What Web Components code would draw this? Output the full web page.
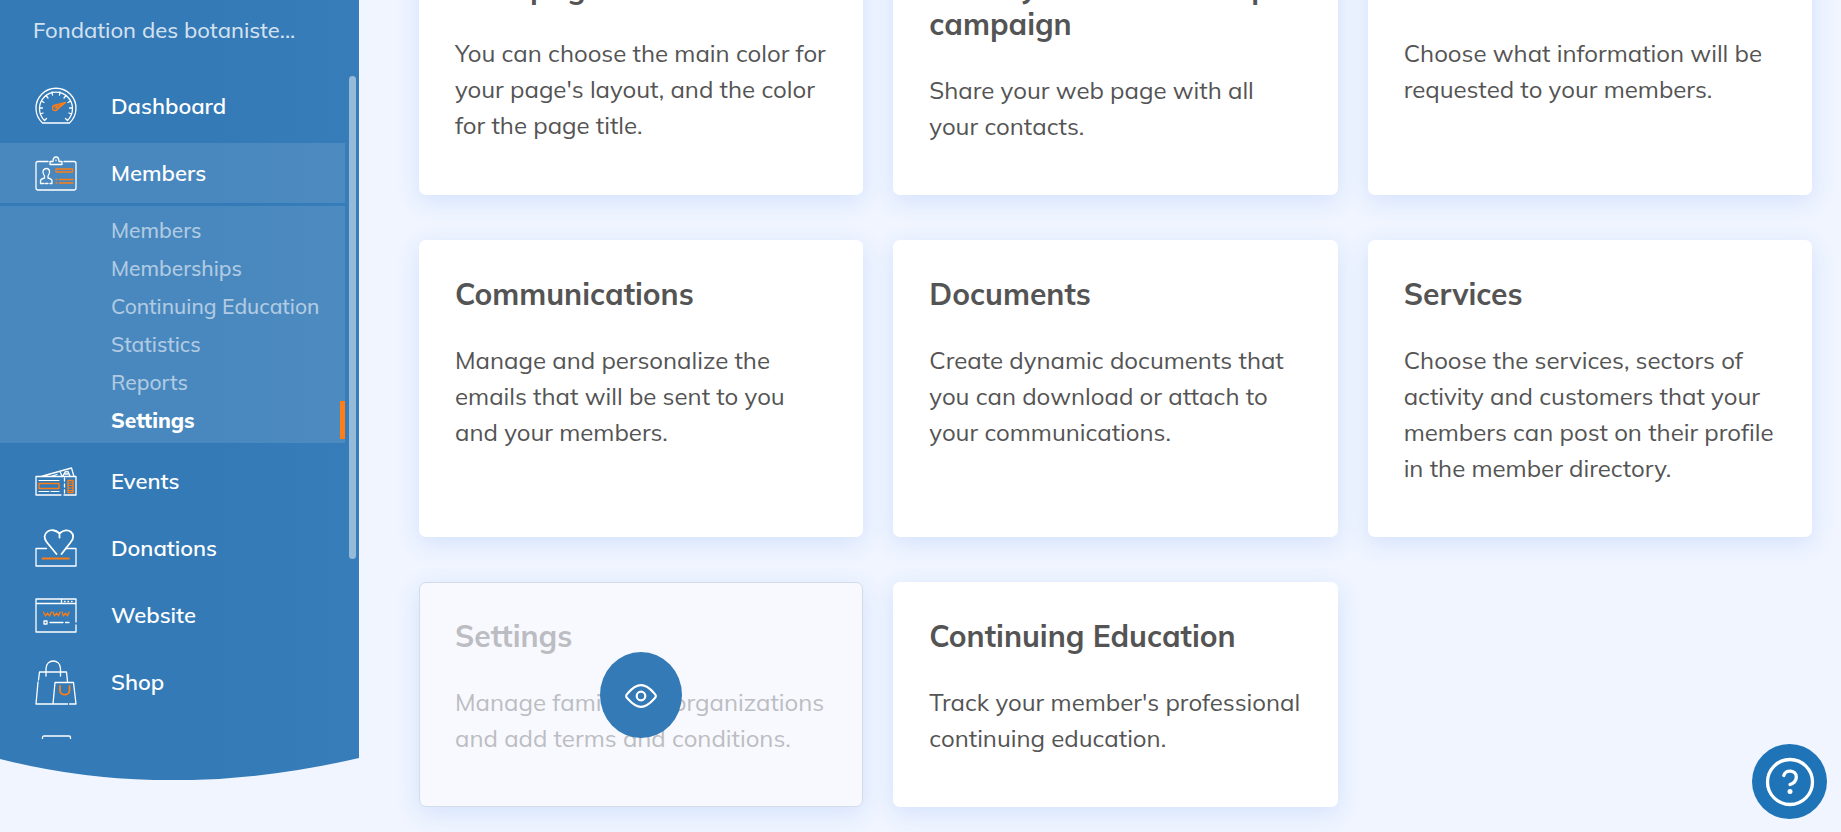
<!DOCTYPE html>
<html lang="en">
<head>
<meta charset="utf-8">
<title>Members - Settings</title>
<style>
  html, body {
    margin: 0;
    height: 100%;
  }
  body {
    background: #f0f5ff;
    color: #545454;
    font-family: Mulish, Muli, Lato, 'Open Sans', sans-serif;
    font-size: 24px;
    font-variant-ligatures: none;
    line-height: 36px;
    overflow: hidden;
  }
</style>
</head>
<body>
<app-shell>
  <side-bar slot="sidebar" organization="Fondation des botaniste...">
    <nav-item icon="dashboard" label="Dashboard"></nav-item>
    <nav-item icon="members" label="Members" open>
      <sub-item>Members</sub-item>
      <sub-item>Memberships</sub-item>
      <sub-item>Continuing Education</sub-item>
      <sub-item>Statistics</sub-item>
      <sub-item>Reports</sub-item>
      <sub-item current>Settings</sub-item>
    </nav-item>
    <nav-item icon="events" label="Events"></nav-item>
    <nav-item icon="donations" label="Donations"></nav-item>
    <nav-item icon="website" label="Website"></nav-item>
    <nav-item icon="shop" label="Shop"></nav-item>
    <nav-item icon="finances" label="Finances"></nav-item>
  </side-bar>

  <settings-card heading="Web page">You can choose the main color for your page's layout, and the color for the page title.</settings-card>
  <settings-card heading="Share your membership campaign">Share your web page with all your contacts.</settings-card>
  <settings-card heading="Form">Choose what information will be requested to your members.</settings-card>
  <settings-card heading="Communications">Manage and personalize the emails that will be sent to you and your members.</settings-card>
  <settings-card heading="Documents">Create dynamic documents that you can download or attach to your communications.</settings-card>
  <settings-card heading="Services">Choose the services, sectors of activity and customers that your members can post on their profile in the member directory.</settings-card>
  <settings-card heading="Settings" inactive>Manage families or organizations and add terms and conditions.</settings-card>
  <settings-card heading="Continuing Education">Track your member's professional continuing education.</settings-card>

  <help-button slot="help"></help-button>
</app-shell>

<script>
(function() {
  // White strokes by default, class "o" for the orange accents
  const ICONS = {
    dashboard: [38, `
      <path d="M7.500 36A20 20 0 1 1 34.500 36Z"/>
      <path d="M11.500 31.500L9.500 33.500A16.500 16.500 0 1 1 32.500 33.500L30.500 31.500"/>
      <path d="M4.500 21h3M37.500 21h-3M5.500 27l2.500-1M36.500 27l-2.500-1M6.500 14l2.500 1.500M35.500 14l-2.500 1.500M11 8.500l2 2.500M31 8.500l-2 2.500M17 5l.5 3M25 5l-.5 3"/>
      <g class="o"><circle cx="20" cy="21" r="2.500"/><path d="M19 18.500L30.500 15.500L21.500 23M20 21l7-3.500"/></g>`],
    members: [35, `
      <path d="M13 5.500H3Q1 5.500 1 7.500V32Q1 34 3 34H39Q41 34 41 32V7.500Q41 5.500 39 5.500H29"/>
      <path d="M15 8.500V5.500H18Q18 1 21 1Q24 1 24 5.500H27V8.500ZM21 4v.5"/>
      <path d="M8.500 27.500H5.500V25Q5.500 23 9.500 22V20Q7.500 17 8 15Q9 12.500 11.500 12.500Q14 12.500 14.500 15Q15 17 13 20V22Q17 23 17 25V27.500H15M10 27.500h3"/>
      <g class="o"><path d="M21 13H37.500V16H21ZM24.500 23.500H38M24.500 27H38M21 23.500h1M21 27h1"/></g>`],
    events: [29, `
      <path d="M26 28H1V9.500H41V28H29M6 9.500L36.500 1L39 9.500M15 9.500L22 7.500M25 4.500L27 9M28 9L30 5L33 4.500L35 9M30 7h3"/>
      <path d="M4 13.500H24M4 24.500H14M16 24.500H24" class="t"/>
      <path d="M29.500 11V27" stroke-dasharray="3 3"/>
      <g class="o"><path d="M4 16.500H24V21.500H4ZM33 13.500H38V25.500H33Z"/><path class="t" d="M33 16H38M33 18.500H38M33 21H38M33 23.500H38"/></g>`],
    donations: [38, `
      <path d="M11.500 19.500H1V37H41V19.500H30.500"/>
      <path d="M21.500 25L12 13.500C4.500 4.500 16.500-3.500 24.500 4.500V8.500M24.500 4.500C33-3.500 43 5.500 35.500 13.500L26.500 25" class="b"/>
      <path d="M7.500 29.500H34" class="o b"/>`],
    website: [35, `
      <path d="M41 24V1H1V34H41V27M1 5.500H41M26.500 1V5.500"/>
      <path d="M29.500 3.500h.5M33 3.500h.5M36.500 3.500h.5M15 24.500H28M30.500 24.500H34M9 23h3v3h-3z"/>
      <path class="o" d="M8.500 14L10.500 18L12.500 15L14.500 18L16.500 14M18 14L19.500 18L21.500 15L23.500 18L25 14M27 14L28.500 18L30.500 15L32.500 18L34 14"/>`],
    shop: [45, `
      <path d="M3.500 20L4.500 12H31.500L32.500 21.500M3 22L1 44H32.500M34.500 44H41L38.500 22.500H20L18 44"/>
      <path d="M11 16V8.500C11-1.500 25.500-1.500 25.500 8.500V16"/>
      <path class="o b" d="M25 26V30.500C25 36 34.500 36 34.500 30.500V26"/>`],
    finances: [28, `
      <path d="M7.500 4V2.500Q7.500 1 9 1H34Q35.500 1 35.500 2.500V4M1 8H41V27H1Z"/>`]
  };

  // Attaches an open shadow root holding the given markup
  class BaseElement extends HTMLElement {
    connectedCallback() {
      if (this.shadowRoot) return;
      this.attachShadow({ mode: 'open' });
      this.shadowRoot.innerHTML = this.template();
    }
  }

  class AppShell extends BaseElement {
    template() {
      return `
        <style>
          :host {
            display: flex;
            align-items: flex-start;
            height: 100vh;
            overflow: hidden;
          }
          main {
            flex: 1;
            min-width: 0;
            padding: 0 29px 24px 60px;
          }
          .grid {
            display: grid;
            grid-template-columns: repeat(3, 1fr);
            gap: 45px 30px;
            /* the first row is scrolled partly out of view */
            margin-top: -67px;
          }
        </style>
        <slot name="sidebar"></slot>
        <main><div class="grid"><slot></slot></div></main>
        <slot name="help"></slot>
      `;
    }
  }

  class SideBar extends BaseElement {
    template() {
      return `
        <style>
          :host {
            display: flex;
            flex-direction: column;
            flex: none;
            position: relative;
            width: 359px;
            height: calc(100vh - 52px);
          }
          .panel {
            flex: 1;
            min-height: 0;
            display: flex;
            flex-direction: column;
            background: linear-gradient(90deg, #337ab7 60%, #377db9);
            padding-bottom: 19px;
          }
          .organization {
            padding: 12px 33px 28px;
            color: rgba(255, 255, 255, 0.78);
            font-size: 22px;
            font-weight: 500;
            white-space: nowrap;
          }
          nav {
            flex: 1;
            min-height: 0;
            overflow: hidden;
            margin-right: 14px;
          }
          .thumb {
            position: absolute;
            top: 76px;
            right: 3px;
            width: 7px;
            height: 483px;
            border-radius: 4px;
            background: rgba(255, 255, 255, 0.47);
          }
          .curve {
            display: block;
            width: 100%;
            height: 22px;
          }
        </style>
        <div class="panel">
          <div class="organization">${this.getAttribute('organization')}</div>
          <nav><slot></slot></nav>
        </div>
        <svg class="curve" viewBox="0 0 359 22" preserveAspectRatio="none" aria-hidden="true">
          <defs>
            <linearGradient id="fill"><stop offset="0.6" stop-color="#337ab7"/><stop offset="1" stop-color="#377db9"/></linearGradient>
          </defs>
          <path d="M0 0H359Q170 44 0 1Z" fill="url(#fill)"/>
        </svg>
        <div class="thumb"></div>
      `;
    }
  }

  class NavItem extends BaseElement {
    template() {
      const [height, shapes] = ICONS[this.getAttribute('icon')];
      return `
        <style>
          :host {
            display: block;
            margin-bottom: 7px;
          }
          :host([open]) {
            margin-bottom: 8px;
          }
          a {
            display: flex;
            align-items: center;
            gap: 34px;
            height: 60px;
            padding-left: 35px;
            color: #fff;
            font-size: 22px;
            font-weight: 600;
            text-decoration: none;
          }
          :host([open]) a, .submenu {
            background: rgba(255, 255, 255, 0.11);
          }
          .submenu {
            display: none;
            margin-top: 3px;
            padding: 5px 0 4px;
          }
          :host([open]) .submenu {
            display: block;
          }
          svg {
            flex: none;
            fill: none;
            stroke: #fff;
            stroke-width: 1.3;
            stroke-linecap: round;
            stroke-linejoin: round;
          }
          .b { stroke-width: 1.8; }
          .t { stroke-width: 1; }
          .o { stroke: #ff7d14; }
        </style>
        <a href="#${this.getAttribute('icon')}">
          <svg width="42" height="${height}" viewBox="0 0 42 ${height}" aria-hidden="true">${shapes}</svg>
          <span>${this.getAttribute('label')}</span>
        </a>
        <div class="submenu"><slot></slot></div>
      `;
    }
  }

  class SubItem extends BaseElement {
    template() {
      return `
        <style>
          :host {
            display: block;
          }
          a {
            display: block;
            padding-left: 111px;
            border-right: 5px solid transparent;
            color: rgba(255, 255, 255, 0.58);
            font-size: 21px;
            font-weight: 500;
            line-height: 38px;
            text-decoration: none;
            white-space: nowrap;
          }
          :host([current]) a {
            border-color: #ff7d14;
            color: #fff;
            font-weight: 800;
          }
        </style>
        <a href="#"><slot></slot></a>
      `;
    }
  }

  class SettingsCard extends BaseElement {
    template() {
      const inactive = this.hasAttribute('inactive');
      return `
        <style>
          :host {
            display: block;
            position: relative;
            box-sizing: border-box;
            padding: 36px 36px 51px;
            border-radius: 7px;
            background: #fff;
            box-shadow: 0 6px 24px rgba(40, 110, 235, 0.14);
          }
          :host([inactive]) {
            padding: 35px 35px 50px;
            border: 1px solid #d3dce9;
            background: #f7f9fe;
            color: #bcbdc2;
          }
          h2 {
            margin: 0 0 29px;
            font-size: 30px;
            font-weight: 700;
            line-height: 37px;
          }
          p {
            margin: 0;
          }
          button {
            position: absolute;
            top: 50%;
            left: 50%;
            transform: translate(-50%, -50%);
            display: flex;
            align-items: center;
            justify-content: center;
            width: 82px;
            height: 86px;
            padding: 2px 0 0;
            border: 0;
            border-radius: 50%;
            background: #337ab7;
          }
        </style>
        <h2>${this.getAttribute('heading')}</h2>
        <p><slot></slot></p>
        ${inactive ? `
          <button type="button" aria-label="Show">
            <svg width="32" height="24" viewBox="0 0 32 24" fill="none" stroke="#fff" stroke-width="2.200">
              <path d="M1.200 12Q1 11 3 9Q10 1.200 16 1.200Q22 1.200 29 9Q31 11 30.800 12Q31 13 29 15Q22 22.800 16 22.800Q10 22.800 3 15Q1 13 1.200 12Z"/>
              <circle cx="16" cy="12" r="4.300"/>
            </svg>
          </button>` : ''}
      `;
    }
  }

  class HelpButton extends BaseElement {
    template() {
      return `
        <style>
          :host {
            display: block;
            position: fixed;
            right: 14px;
            bottom: 13px;
          }
          button {
            display: block;
            width: 75px;
            height: 75px;
            padding: 0;
            border: 0;
            border-radius: 50%;
            background: #1f73b7;
          }
          svg {
            display: block;
          }
        </style>
        <button type="button" aria-label="Help">
          <svg width="75" height="75" viewBox="0 0 75 75" fill="none" stroke="#fff" stroke-width="3.300" stroke-linecap="round">
            <circle cx="38" cy="38" r="22.500"/>
            <path d="M31.800 31.500C33.500 25 44.300 25.800 44.300 33C44.300 38.500 39.500 40 38 40.500"/>
            <circle cx="38" cy="47.500" r="2.500" fill="#fff" stroke="none"/>
          </svg>
        </button>
      `;
    }
  }

  customElements.define('app-shell', AppShell);
  customElements.define('side-bar', SideBar);
  customElements.define('nav-item', NavItem);
  customElements.define('sub-item', SubItem);
  customElements.define('settings-card', SettingsCard);
  customElements.define('help-button', HelpButton);
})();
</script>
</body>
</html>
